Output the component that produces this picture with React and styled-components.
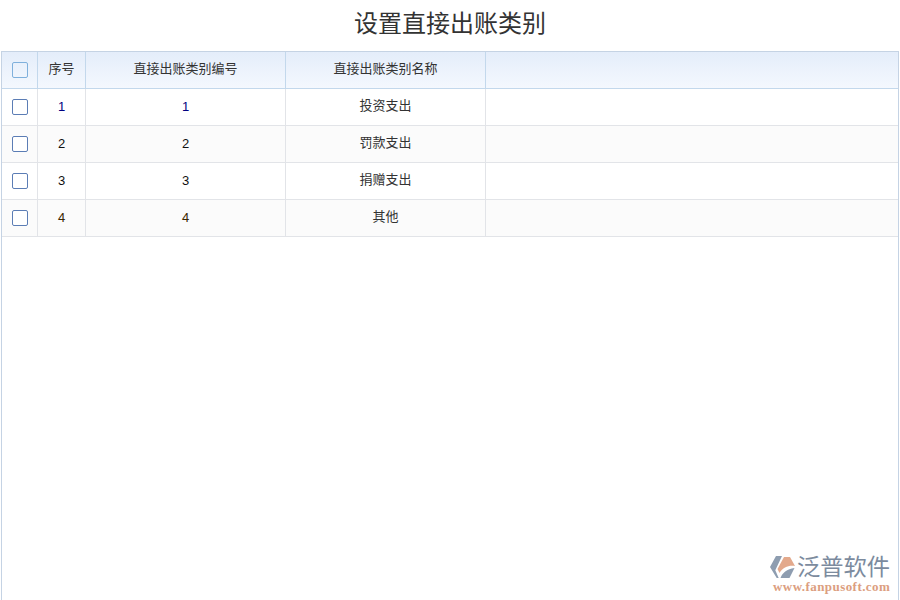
import React from 'react';
import styled, { createGlobalStyle } from 'styled-components';

const GlobalStyle = createGlobalStyle`
  html, body {
    margin: 0;
    padding: 0;
    height: 100%;
    background: #fff;
    overflow: hidden;
  }
  #root {
    height: 100%;
  }
`;

const Page = styled.div`
  position: relative;
  width: 900px;
  height: 600px;
  display: flex;
  flex-direction: column;
  font-family: "Liberation Sans", "Noto Sans CJK SC", sans-serif;
`;

const Title = styled.h1`
  margin: 0;
  height: 51px;
  line-height: 48px;
  text-align: center;
  font-size: 24px;
  font-weight: 400;
  color: #333;
`;

const Frame = styled.div`
  flex: 1;
  margin: 0 1px;
  border: 1px solid #c5d3e4;
  border-bottom: 0;
`;

const Row = styled.div`
  display: grid;
  grid-template-columns: 36px 48px 200px 200px 1fr;
  height: 37px;
  box-sizing: border-box;
  border-bottom: 1px solid ${(p) => (p.$head ? '#c3d8ec' : '#e2e4e8')};
  background: ${(p) =>
    p.$head ? 'linear-gradient(180deg, #e4edfa 0%, #f4f8fe 100%)' : p.$odd ? '#fbfbfb' : '#fff'};
`;

const Cell = styled.div`
  display: flex;
  align-items: center;
  justify-content: center;
  box-sizing: border-box;
  padding-bottom: ${(p) => (p.$up ? '3px' : '0')};
  font-size: 13px;
  line-height: 16px;
  color: ${(p) => p.$color || '#333'};
  border-right: 1px solid ${(p) => (p.$head ? '#c3d8ec' : '#e2e4e8')};
  &:last-child {
    border-right: 0;
  }
`;

const Check = styled.span`
  display: block;
  width: 14px;
  height: 14px;
  border-radius: 2px;
  background: ${(p) => (p.$head ? 'transparent' : '#fff')};
  border: 1px solid ${(p) => (p.$head ? '#7fb0dc' : '#5b7db5')};
`;

const Logo = styled.div`
  position: absolute;
  right: 10px;
  bottom: 7px;
  width: 120px;
  display: grid;
  grid-template-columns: 27px 1fr;
  align-items: center;
`;

const LogoName = styled.div`
  font-size: 23.25px;
  line-height: 26px;
  color: #7c8b9e;
  white-space: nowrap;
`;

const LogoUrl = styled.div`
  grid-column: 1 / 3;
  padding-left: 3px;
  font-family: "Liberation Serif", serif;
  font-size: 13px;
  font-weight: 700;
  line-height: 13px;
  letter-spacing: 0.44px;
  color: #dc9e80;
  white-space: nowrap;
`;

const rows = [
  { id: 1, name: '投资支出', numColor: '#000080' },
  { id: 2, name: '罚款支出', numColor: '#111' },
  { id: 3, name: '捐赠支出', numColor: '#111' },
  { id: 4, name: '其他', numColor: '#3a2600' },
];

const App = () => {
  return (
    <Page>
      <GlobalStyle />
      <Title>设置直接出账类别</Title>
      <Frame>
        <Row $head>
          <Cell $head>
            <Check $head />
          </Cell>
          <Cell $head $up>序号</Cell>
          <Cell $head $up>直接出账类别编号</Cell>
          <Cell $head $up>直接出账类别名称</Cell>
          <Cell $head />
        </Row>
        {rows.map((item, i) => {
          return (
            <Row key={item.id} $odd={i % 2 === 1}>
              <Cell>
                <Check />
              </Cell>
              <Cell $color={item.numColor}>{item.id}</Cell>
              <Cell $color={item.numColor}>{item.id}</Cell>
              <Cell $up>{item.name}</Cell>
              <Cell />
            </Row>
          );
        })}
      </Frame>
      <Logo>
        <svg width="25" height="23" viewBox="0 0 25 23">
          <path d="M6 0 L12 0 L5.3 14.3 L8.7 22 L6.7 22 L0 11 Z" fill="#8e9db0" />
          <path d="M14 1 L20 1 L25 10 C19 9 13 11 9.5 17 L7.5 13 Z" fill="#e3a98c" />
          <path d="M24.5 12 L19.5 22 L10.5 22 C12 17 17 13 24.5 12 Z" fill="#8e9db0" />
        </svg>
        <LogoName>泛普软件</LogoName>
        <LogoUrl>www.fanpusoft.com</LogoUrl>
      </Logo>
    </Page>
  );
};

export default App;
